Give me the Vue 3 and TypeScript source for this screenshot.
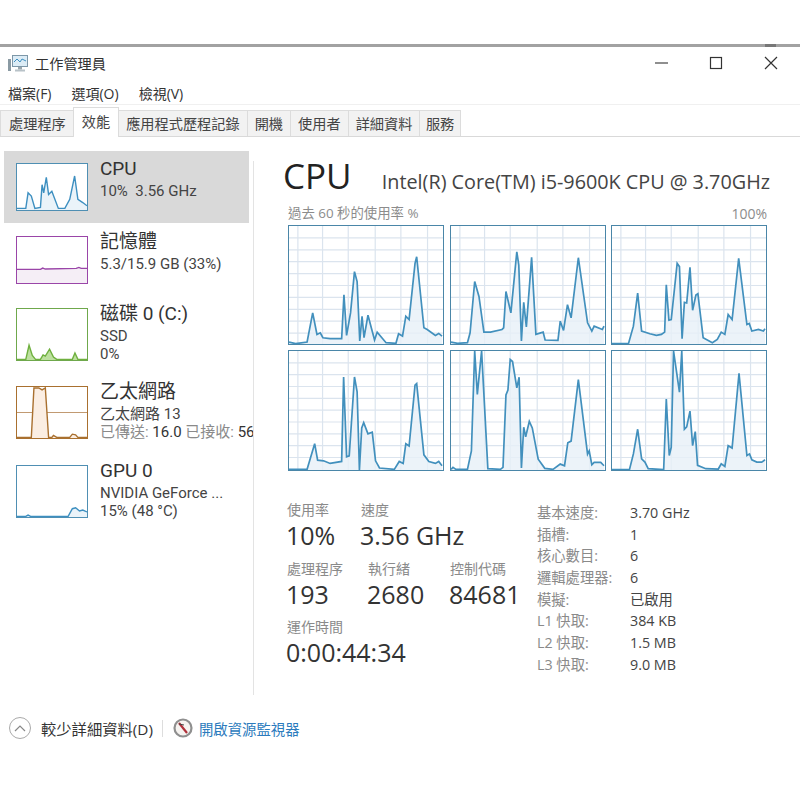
<script setup lang="ts">
interface Graph { vx: number; vy: number; w: number; h: number; pts: number[][] }

const tabs = ['處理程序', '效能', '應用程式歷程記錄', '開機', '使用者', '詳細資料', '服務']
const menus = ['檔案(F)', '選項(O)', '檢視(V)']

// points are read off the reference at 3x, vx/vy is the top-left of each box
const cpuGraphs: Graph[] = [
  { vx: 25, vy: 227, w: 468, h: 357, pts: [[25,578],[45,583],[80,578],[97,490],[110,555],[120,550],[128,565],[150,568],[185,568],[192,435],[200,558],[212,490],[224,365],[232,395],[240,575],[247,500],[253,565],[265,497],[285,572],[293,548],[320,580],[350,582],[358,553],[370,560],[380,500],[390,510],[408,340],[413,320],[435,535],[445,540],[470,558],[480,552],[490,560]] },
  { vx: 510, vy: 227, w: 468, h: 357, pts: [[510,578],[530,582],[560,580],[568,550],[582,395],[595,440],[610,548],[630,548],[665,540],[670,535],[677,425],[692,490],[710,305],[716,345],[724,575],[731,458],[739,532],[755,322],[768,555],[790,548],[796,572],[835,573],[842,515],[852,543],[864,465],[875,505],[897,323],[925,520],[938,545],[945,530],[970,540],[975,530]] },
  { vx: 35, vy: 227, w: 468, h: 357, pts: [[35,583],[85,583],[100,530],[113,430],[125,545],[150,553],[170,558],[185,555],[195,548],[200,405],[208,512],[215,510],[233,340],[240,350],[248,568],[255,458],[262,460],[272,352],[280,482],[290,436],[296,432],[312,565],[340,580],[355,570],[367,548],[378,555],[388,495],[400,510],[420,325],[445,525],[452,522],[460,545],[480,540],[495,545],[500,538]] },
  { vx: 25, vy: 16, w: 468, h: 362, pts: [[25,376],[80,376],[103,298],[112,348],[130,350],[150,358],[185,352],[191,95],[200,338],[208,335],[224,95],[232,140],[239,378],[246,250],[252,234],[265,268],[278,263],[288,350],[300,372],[345,376],[360,352],[372,358],[380,298],[390,305],[408,120],[413,115],[435,332],[450,352],[470,358],[480,352],[490,365]] },
  { vx: 510, vy: 16, w: 468, h: 362, pts: [[510,376],[516,370],[525,376],[560,376],[572,320],[582,16],[590,148],[603,16],[622,374],[660,376],[668,370],[677,150],[683,135],[690,42],[697,48],[710,128],[717,96],[724,372],[731,248],[737,277],[748,230],[757,250],[775,345],[795,373],[820,376],[842,360],[855,365],[865,295],[875,290],[897,103],[925,330],[930,320],[938,362],[945,355],[965,355],[975,365]] },
  { vx: 35, vy: 17, w: 468, h: 362, pts: [[35,378],[88,378],[100,330],[113,255],[125,345],[135,355],[145,375],[192,378],[200,163],[209,335],[215,310],[222,17],[240,142],[247,17],[255,255],[262,248],[272,200],[280,305],[288,262],[295,365],[320,375],[358,376],[367,360],[378,368],[388,305],[400,312],[421,85],[445,335],[453,330],[460,348],[475,355],[490,355],[500,348]] },
]

const devices = [
  { kind: 'cpu', title: 'CPU', lines: ['10%\u00a0\u00a03.56 GHz'], vy: 41, h: 142, mid: false,
    pts: [[48,178],[75,178],[82,130],[92,140],[103,178],[120,175],[125,105],[130,130],[138,82],[145,135],[155,125],[175,178],[195,178],[210,150],[225,78],[235,150],[250,160],[263,170]] },
  { kind: 'mem', title: '記憶體', lines: ['5.3/15.9 GB (33%)'], vy: 258, h: 142, mid: false,
    pts: [[48,358],[120,358],[127,354],[135,357],[230,355],[238,352],[245,355],[263,355]] },
  { kind: 'disk', title: '磁碟 0 (C:)', lines: ['SSD', '0%'], vy: 475, h: 159, mid: false,
    pts: [[48,632],[75,632],[85,588],[95,620],[105,632],[120,632],[128,618],[135,622],[148,600],[160,625],[170,632],[218,632],[226,612],[235,632],[263,632]] },
  { kind: 'net', title: '乙太網路', lines: ['乙太網路 13'], vy: 49, h: 159, mid: true,
    pts: [[48,206],[92,206],[100,52],[115,52],[125,58],[135,52],[145,206],[155,206],[160,200],[170,206],[210,206],[218,196],[228,198],[235,206],[263,206]] },
  { kind: 'gpu', title: 'GPU 0', lines: ['NVIDIA GeForce ...', '15% (48 °C)'], vy: 284, h: 160, mid: false,
    pts: [[48,442],[75,442],[82,438],[90,442],[205,442],[218,418],[228,415],[240,425],[250,422],[263,428]] },
]

const specs = [
  ['基本速度:', '3.70 GHz'], ['插槽:', '1'], ['核心數目:', '6'], ['邏輯處理器:', '6'],
  ['模擬:', '已啟用'], ['L1 快取:', '384 KB'], ['L2 快取:', '1.5 MB'], ['L3 快取:', '9.0 MB'],
]

const gridX = [27, 102, 180, 262, 340, 421]
const gridY = [36, 72, 108, 144, 180, 216, 252, 288, 324]

const line = (pts: number[][]) => pts.map((p) => p.join(',')).join(' ')
const area = (pts: number[][], bottom: number) =>
  `${pts[0][0]},${bottom} ${line(pts)} ${pts[pts.length - 1][0]},${bottom}`
</script>

<template>
  <div class="window">
    <div class="titlebar">
      <svg class="app-icon" width="20" height="20" viewBox="0 0 20 20" aria-hidden="true">
        <rect x="0" y="6" width="3" height="12" fill="#8a9aa3" />
        <rect x="4.5" y="2.5" width="15" height="11" fill="#dcecf6" stroke="#7d97a8" />
        <polyline points="6,9 9,6 12,9 14,6 18,8" fill="none" stroke="#3d8fc0" />
        <rect x="10" y="14" width="4" height="2.5" fill="#9aa7ae" />
        <rect x="7" y="16.5" width="10" height="2" fill="#b8c2c8" />
      </svg>
      <span class="app-title">工作管理員</span>
      <div class="controls">
        <svg width="14" height="14" viewBox="0 0 14 14" aria-hidden="true"><path d="M1 7h13" stroke="#444" stroke-width="1.2" /></svg>
        <svg width="14" height="14" viewBox="0 0 14 14" aria-hidden="true"><rect x="1.5" y="1.5" width="11" height="11" fill="none" stroke="#333" stroke-width="1.2" /></svg>
        <svg width="14" height="14" viewBox="0 0 14 14" aria-hidden="true"><path d="M1 1l12 12M13 1L1 13" stroke="#333" stroke-width="1.2" /></svg>
      </div>
    </div>

    <div class="menubar">
      <span v-for="m in menus" :key="m">{{ m }}</span>
    </div>

    <div class="tabs">
      <div v-for="t in tabs" :key="t" class="tab" :class="{ active: t === '效能' }">{{ t }}</div>
    </div>

    <div class="main">
      <aside class="sidebar">
        <div v-for="d in devices" :key="d.kind" class="device" :class="[d.kind, { selected: d.kind === 'cpu' }]">
          <svg class="thumb" :viewBox="`48 ${d.vy} 215 ${d.h}`" preserveAspectRatio="none" aria-hidden="true">
            <line v-if="d.mid" x1="48" x2="263" :y1="d.vy + d.h / 2" :y2="d.vy + d.h / 2" class="mid" vector-effect="non-scaling-stroke" />
            <polygon :points="area(d.pts, d.vy + d.h)" class="fill" />
            <polyline :points="line(d.pts)" class="stroke" vector-effect="non-scaling-stroke" />
          </svg>
          <div class="device-text">
            <div class="device-title">{{ d.title }}</div>
            <div v-for="l in d.lines" :key="l" class="device-line">{{ l }}</div>
            <div v-if="d.kind === 'net'" class="device-line net-rate">
              <span class="dim">已傳送:</span> 16.0 <span class="dim">已接收:</span> 56
            </div>
          </div>
        </div>
      </aside>

      <section class="panel">
        <div class="head">
          <h1>CPU</h1>
          <span class="model">Intel(R) Core(TM) i5-9600K CPU @ 3.70GHz</span>
        </div>
        <div class="caption"><span>過去 60 秒的使用率 %</span><span class="max">100%</span></div>

        <div class="graphs">
          <svg v-for="(g, i) in cpuGraphs" :key="i" class="graph" :viewBox="`0 0 ${g.w} ${g.h}`" preserveAspectRatio="none" aria-hidden="true">
            <line v-for="x in gridX" :key="'x' + x" :x1="x" :x2="x" y1="0" :y2="g.h" class="grid" vector-effect="non-scaling-stroke" />
            <line v-for="y in gridY" :key="'y' + y" x1="0" :x2="g.w" :y1="y" :y2="y" class="grid" vector-effect="non-scaling-stroke" />
            <g :transform="`translate(${-g.vx} ${-g.vy})`">
              <polygon :points="area(g.pts, g.vy + g.h)" class="graph-fill" />
              <polyline :points="line(g.pts)" class="graph-line" vector-effect="non-scaling-stroke" />
            </g>
          </svg>
        </div>

        <div class="stats">
          <div class="stats-left">
            <div class="stat-row first">
              <div class="stat s-usage"><label>使用率</label><b>10%</b></div>
              <div class="stat"><label>速度</label><b>3.56 GHz</b></div>
            </div>
            <div class="stat-row">
              <div class="stat s-proc"><label>處理程序</label><b>193</b></div>
              <div class="stat s-thread"><label>執行緒</label><b>2680</b></div>
              <div class="stat"><label>控制代碼</label><b>84681</b></div>
            </div>
            <div class="stat-row">
              <div class="stat"><label>運作時間</label><b>0:00:44:34</b></div>
            </div>
          </div>
          <dl class="specs">
            <template v-for="s in specs" :key="s[0]">
              <dt>{{ s[0] }}</dt>
              <dd>{{ s[1] }}</dd>
            </template>
          </dl>
        </div>
      </section>
    </div>

    <div class="footer">
      <span class="chevron">
        <svg width="12" height="8" viewBox="0 0 12 8" aria-hidden="true"><path d="M1 7l5-5 5 5" fill="none" stroke="#888" stroke-width="1.2" /></svg>
      </span>
      <span class="less">較少詳細資料(D)</span>
      <span class="sep"></span>
      <svg width="20" height="20" viewBox="0 0 20 20" aria-hidden="true">
        <circle cx="10" cy="10" r="8.5" fill="#f6f3f0" stroke="#8f8f8f" stroke-width="2.2" />
        <path d="M6 5l8 10" stroke="#b0303a" stroke-width="2.2" />
        <path d="M6 6l5 1" stroke="#444" stroke-width="1" />
      </svg>
      <a class="link">開啟資源監視器</a>
    </div>
  </div>
</template>

<style>
html, body { margin: 0; background: #fff; }
</style>

<style scoped>
.window { position: relative; width: 800px; height: 800px; box-sizing: border-box; padding-top: 44px; font-family: "Open Sans", "Noto Sans CJK TC", sans-serif; color: #333; background: #fff; overflow: hidden; }
.window::after { content: ""; position: absolute; left: 765px; top: 44px; width: 11px; height: 3px; background: #777; }
.titlebar { display: flex; align-items: center; height: 32px; padding-bottom: 3px; border-top: 3px solid #a2a2a2; padding-left: 8px; }
.app-title { margin-left: 7px; font-size: 14.2px; color: #333; }
.controls { display: flex; align-items: center; gap: 41px; margin-left: auto; padding-right: 22px; }
.menubar { display: flex; gap: 20px; height: 23px; align-items: center; padding-left: 8px; font-size: 14px; border-bottom: 1px solid #f0f0f0; box-sizing: border-box; }
.tabs { display: flex; height: 32px; align-items: flex-end; border-bottom: 1px solid #d9d9d9; box-sizing: border-box; }
.tab { height: 25px; line-height: 26px; padding: 0 7px; border: 1px solid #dcdcdc; border-bottom: 0; margin-left: -1px; background: #f2f2f2; font-size: 14.2px; color: #444; }
.tab:first-child { margin-left: 0; padding-left: 8px; }
.tab:last-child { padding: 0 5.5px; }
.tab.active { height: 29px; line-height: 27px; margin-bottom: -1px; background: #fff; padding: 0 8px; position: relative; }
.main { display: flex; height: 558px; }
.sidebar { width: 249px; padding-left: 4px; padding-top: 14px; flex: none; }
.device { display: flex; padding: 12px 0 12px 12px; white-space: nowrap; overflow: hidden; }
.device.selected { background: #d9d9d9; margin-right: 4px; }
.device.mem { padding-top: 13px; }
.device.net { padding-bottom: 13px; }
.thumb { width: 72px; flex: none; display: block; box-sizing: border-box; border: 1.3px solid; background: #fff; }
.cpu .thumb, .mem .thumb { height: 48px; }
.disk .thumb, .net .thumb, .gpu .thumb { height: 53px; }
.mid { stroke-width: 1; }
.stroke { fill: none; stroke-width: 1.4; }
.cpu .thumb, .gpu .thumb { border-color: #4f8fb3; }
.cpu .stroke, .gpu .stroke { stroke: #3d8fc0; }
.cpu .fill, .gpu .fill { fill: #eaf3f9; stroke: none; }
.mem .thumb { border-color: #9a45a8; }
.mem .stroke { stroke: #9a45a8; }
.mem .fill { fill: #f5eef6; stroke: none; }
.disk .thumb { border-color: #6fa84c; }
.disk .stroke { stroke: #6fb03f; }
.disk .fill { fill: #bde09f; stroke: none; }
.net .thumb { border-color: #a9702f; }
.net .stroke { stroke: #a9702f; }
.net .fill { fill: #fbeee3; stroke: none; }
.mid { stroke: #c19a72; }
.device-text { margin-left: 12px; margin-top: -5px; height: 59px; min-width: 0; }
.cpu .device-text, .mem .device-text { height: 53px; }
.device-title { font-family: Roboto, "Noto Sans CJK TC", sans-serif; font-size: 19px; line-height: 22px; margin-bottom: 2px; color: #333; }
.device-line { font-family: Roboto, "Noto Sans CJK TC", sans-serif; font-size: 15px; line-height: 18px; color: #444; }
.net-rate { color: #333; }
.dim { color: #8a8a8a; }
.panel { flex: none; width: 546px; margin-top: 24px; border-left: 1px solid #e3e3e3; box-sizing: border-box; padding: 0 32px 0 33px; }
.head { display: flex; align-items: baseline; justify-content: space-between; margin-top: -7px; margin-left: -4px; margin-right: -3px; height: 46px; }
h1 { margin: 0; font-size: 35px; line-height: 44px; font-weight: 400; color: #222; }
.model { font-size: 19.8px; color: #444; white-space: nowrap; }
.caption { display: flex; justify-content: space-between; align-items: center; margin-top: 3px; height: 21px; line-height: 21px; font-size: 13.4px; color: #8c8c8c; padding-left: 1px; }
.max { font-size: 14px; }
.graphs { display: grid; grid-template-columns: repeat(3, 156px); grid-template-rows: 120px 121px; gap: 5px 5.5px; margin-left: 1px; margin-top: 1px; }
.graph { width: 100%; height: 100%; display: block; box-sizing: border-box; border: 1.5px solid #4a86a8; background: #fff; }
.grid { stroke: #dbe4ee; stroke-width: 1.2; }
.graph-fill { fill: #e7f0f8; fill-opacity: 0.8; }
.graph-line { fill: none; stroke: #4290bd; stroke-width: 1.7; }
.stats { display: flex; margin-top: 30px; }
.stats-left { width: 250px; flex: none; }
.stat-row { display: flex; margin-top: 8.5px; }
.stat-row.first { margin-top: 0; }
.stat { display: flex; flex-direction: column; }
.s-usage { width: 74px; }
.s-proc { width: 81px; }
.s-thread { width: 82px; }
label { font-size: 14px; line-height: 18px; color: #8a8a8a; }
b { font-size: 25px; line-height: 32px; font-weight: 400; color: #333; white-space: nowrap; margin-left: -1px; }
.specs { display: grid; grid-template-columns: 93px 1fr; grid-auto-rows: 21.7px; margin: 1px 0 0; font-size: 14.3px; line-height: 21.7px; }
dt { color: #8a8a8a; }
dd { margin: 0; color: #444; }
.footer { display: flex; align-items: center; height: 36px; padding-left: 9px; margin-top: 15px; font-size: 14.4px; }
.chevron { display: flex; align-items: center; justify-content: center; width: 22px; height: 22px; border: 1px solid #aaa; border-radius: 50%; box-sizing: border-box; flex: none; }
.less { margin-left: 10px; color: #333; font-size: 15.3px; }
.sep { width: 1px; height: 17px; background: #ddd; margin: 0 10px 0 9px; }
.link { margin-left: 6px; color: #2b7bbd; }
</style>
